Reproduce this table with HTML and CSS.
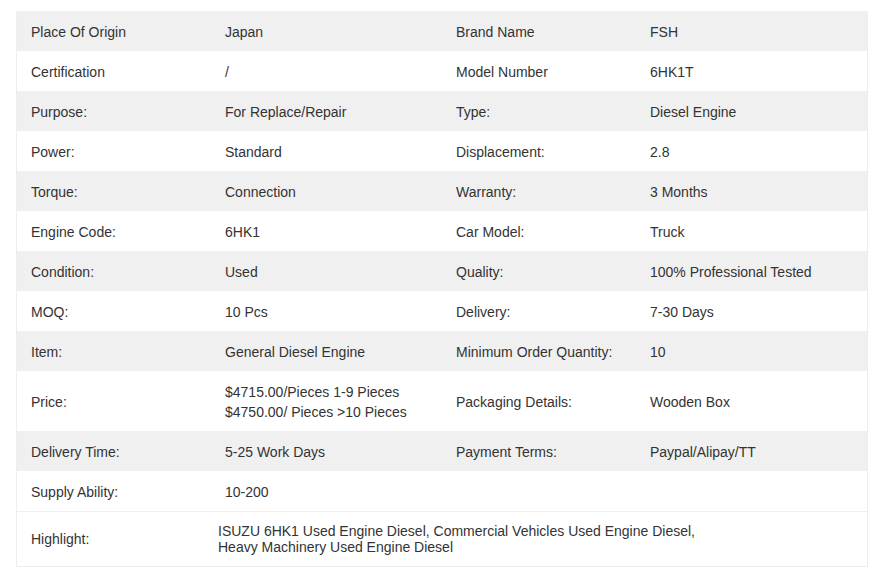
FILE: index.html
```html
<!DOCTYPE html>
<html>
<head>
<meta charset="utf-8">
<link rel="stylesheet" href="styles.css">
</head>
<body>
<div class="specs">
  <table class="grid">
    <colgroup><col class="c1"><col class="c2"><col class="c3"><col class="c4"></colgroup>
    <tr class="alt"><td>Place Of Origin</td><td>Japan</td><td>Brand Name</td><td>FSH</td></tr>
    <tr><td>Certification</td><td>/</td><td>Model Number</td><td>6HK1T</td></tr>
    <tr class="alt"><td>Purpose:</td><td>For Replace/Repair</td><td>Type:</td><td>Diesel Engine</td></tr>
    <tr><td>Power:</td><td>Standard</td><td>Displacement:</td><td>2.8</td></tr>
    <tr class="alt"><td>Torque:</td><td>Connection</td><td>Warranty:</td><td>3 Months</td></tr>
    <tr><td>Engine Code:</td><td>6HK1</td><td>Car Model:</td><td>Truck</td></tr>
    <tr class="alt"><td>Condition:</td><td>Used</td><td>Quality:</td><td>100% Professional Tested</td></tr>
    <tr><td>MOQ:</td><td>10 Pcs</td><td>Delivery:</td><td>7-30 Days</td></tr>
    <tr class="alt"><td>Item:</td><td>General Diesel Engine</td><td>Minimum Order Quantity:</td><td>10</td></tr>
    <tr><td>Price:</td><td>$4715.00/Pieces 1-9 Pieces<br>$4750.00/ Pieces &gt;10 Pieces</td><td>Packaging Details:</td><td>Wooden Box</td></tr>
    <tr class="alt"><td>Delivery Time:</td><td>5-25 Work Days</td><td>Payment Terms:</td><td>Paypal/Alipay/TT</td></tr>
    <tr class="line"><td>Supply Ability:</td><td colspan="3">10-200</td></tr>
  </table>
  <table class="highlight">
    <tr>
      <th>Highlight:</th>
      <td>ISUZU 6HK1 Used Engine Diesel, Commercial Vehicles Used Engine Diesel,<br>Heavy Machinery Used Engine Diesel</td>
    </tr>
  </table>
</div>
</body>
</html>
```

FILE: styles.css
```css
html, body {
  margin: 0;
  padding: 0;
  background: #fff;
}
body {
  font-family: "Liberation Sans", Arial, sans-serif;
  font-size: 14px;
  color: #333;
}
.specs {
  margin: 11px 0 0 16px;
  width: 852px;
  box-sizing: border-box;
  border-left: 1px solid #eee;
  border-right: 1px solid #eee;
}
table {
  border-collapse: collapse;
  width: 100%;
  table-layout: fixed;
}
.c1 { width: 194px; }
.c2 { width: 231px; }
.c3 { width: 194px; }
.c4 { width: 231px; }
.grid td {
  padding: 11px 14px 9px 14px;
  line-height: 20px;
  vertical-align: middle;
}
.grid tr.alt td {
  background: #f0f0f0;
}
.grid tr.line td {
  border-bottom: 1px solid #eee;
}
.highlight th {
  width: 193px;
  box-sizing: border-box;
  font-weight: normal;
  text-align: left;
  padding: 11px 14px;
  vertical-align: middle;
}
.highlight td {
  padding: 11px 8px 11px 8px;
  line-height: 16px;
  vertical-align: middle;
}
.highlight tr {
  border-bottom: 1px solid #eee;
}
```
